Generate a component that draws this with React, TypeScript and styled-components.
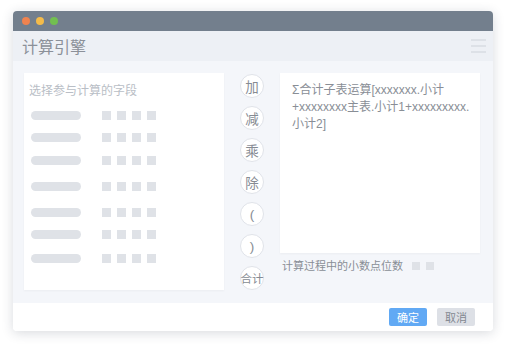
import React from 'react';
import styled, { createGlobalStyle } from 'styled-components';

const GlobalStyle = createGlobalStyle`
  html, body {
    margin: 0;
    padding: 0;
    background: #ffffff;
    font-family: "Liberation Sans", "Noto Sans CJK SC", sans-serif;
  }
`;

const Page = styled.div`
  width: 506px;
  height: 346px;
  padding: 11px 0 0 13px;
  box-sizing: border-box;
`;

const Window = styled.div`
  width: 480px;
  height: 320px;
  border-radius: 4px;
  overflow: hidden;
  background: #fff;
  box-shadow: 0 2px 12px rgba(40, 50, 70, 0.18);
  display: flex;
  flex-direction: column;
`;

const TitleBar = styled.div`
  height: 20px;
  background: #737f8d;
  display: flex;
  align-items: center;
  gap: 6px;
  padding-left: 9px;
  flex-shrink: 0;
`;

const Dot = styled.span<{ $color: string }>`
  width: 8px;
  height: 8px;
  border-radius: 50%;
  background: ${(p) => p.$color};
`;

const Header = styled.div`
  height: 30px;
  background: #edf0f5;
  display: flex;
  align-items: center;
  justify-content: space-between;
  padding: 0 7px 0 9px;
  flex-shrink: 0;
`;

const Title = styled.h1`
  margin: 0;
  font-size: 16px;
  font-weight: 400;
  color: #8b9099;
`;

const Burger = styled.div`
  width: 15px;
  display: flex;
  flex-direction: column;
  gap: 4px;
  span {
    height: 2px;
    background: #dde1e7;
  }
`;

const Body = styled.div`
  height: 242px;
  background: #f4f6fa;
  display: flex;
  padding: 12px 13px 0 11px;
  box-sizing: border-box;
  flex-shrink: 0;
`;

const FieldPanel = styled.div`
  width: 200px;
  height: 217px;
  flex-shrink: 0;
  background: #fff;
  padding: 10px 0 0 5px;
  box-sizing: border-box;
  box-shadow: 0 1px 2px rgba(0, 0, 0, 0.04);
`;

const PanelLabel = styled.div`
  font-size: 12px;
  line-height: 16px;
  color: #b9bec6;
`;

const FieldRow = styled.div<{ $gap: number }>`
  display: flex;
  align-items: center;
  height: 9px;
  margin-top: ${(p) => p.$gap}px;
  padding-left: 2px;
`;

const Pill = styled.span`
  width: 50px;
  height: 9px;
  border-radius: 5px;
  background: #dfe2e7;
  margin-right: 21px;
`;

const Square = styled.span<{ $size?: number }>`
  width: ${(p) => p.$size ?? 9}px;
  height: ${(p) => p.$size ?? 9}px;
  background: #dfe2e7;
  margin-right: 6px;
`;

const OpColumn = styled.div`
  width: 24px;
  flex-shrink: 0;
  margin: 1px 16px 0 16px;
  display: flex;
  flex-direction: column;
  align-items: center;
  gap: 8px;
`;

const OpButton = styled.div<{ $small?: boolean }>`
  width: 24px;
  height: 24px;
  flex-shrink: 0;
  border-radius: 50%;
  background: #fff;
  border: 1px solid #e0e3e9;
  box-sizing: border-box;
  display: flex;
  align-items: center;
  justify-content: center;
  font-size: ${(p) => (p.$small ? 11.5 : 13.5)}px;
  color: #868b93;
  white-space: nowrap;
`;

const RightColumn = styled.div`
  width: 200px;
  flex-shrink: 0;
  display: flex;
  flex-direction: column;
`;

const FormulaBox = styled.div`
  height: 180px;
  background: #fff;
  padding: 9px 10px 0 12px;
  box-sizing: border-box;
  font-size: 12px;
  line-height: 17px;
  color: #898e96;
  box-shadow: 0 1px 2px rgba(0, 0, 0, 0.04);
`;

const DecimalRow = styled.div`
  display: flex;
  align-items: center;
  margin-top: 6px;
  padding-left: 2px;
  font-size: 11px;
  line-height: 14px;
  color: #898e96;
  span:first-child {
    margin-right: 9px;
  }
`;

const Footer = styled.div`
  flex: 1;
  background: #fff;
  display: flex;
  align-items: center;
  justify-content: flex-end;
  gap: 10px;
  padding-right: 18px;
`;

const Button = styled.button<{ $primary?: boolean }>`
  width: 38px;
  height: 18px;
  border: none;
  border-radius: 2px;
  padding: 0;
  font-family: inherit;
  font-size: 11px;
  background: ${(p) => (p.$primary ? '#61a9f4' : '#dde0e6')};
  color: ${(p) => (p.$primary ? '#ffffff' : '#838891')};
`;

const rowGaps = [12, 13, 14, 17, 17, 13, 15];
const ops = ['加', '减', '乘', '除', '(', ')', '合计'];

export default function App() {
  return (
    <Page>
      <GlobalStyle />
      <Window>
        <TitleBar>
          <Dot $color="#f0834f" />
          <Dot $color="#f4bb4a" />
          <Dot $color="#72bf50" />
        </TitleBar>
        <Header>
          <Title>计算引擎</Title>
          <Burger>
            <span />
            <span />
            <span />
          </Burger>
        </Header>
        <Body>
          <FieldPanel>
            <PanelLabel>选择参与计算的字段</PanelLabel>
            {rowGaps.map((g, i) => (
              <FieldRow key={i} $gap={g}>
                <Pill />
                <Square />
                <Square />
                <Square />
                <Square />
              </FieldRow>
            ))}
          </FieldPanel>
          <OpColumn>
            {ops.map((op) => (
              <OpButton key={op} $small={op.length > 1}>
                {op}
              </OpButton>
            ))}
          </OpColumn>
          <RightColumn>
            <FormulaBox>
              Σ合计子表运算[xxxxxxx.小计
              <br />
              +xxxxxxxx主表.小计1+xxxxxxxxx.
              <br />
              小计2]
            </FormulaBox>
            <DecimalRow>
              <span>计算过程中的小数点位数</span>
              <Square $size={8} />
              <Square $size={8} />
            </DecimalRow>
          </RightColumn>
        </Body>
        <Footer>
          <Button $primary>确定</Button>
          <Button>取消</Button>
        </Footer>
      </Window>
    </Page>
  );
}
